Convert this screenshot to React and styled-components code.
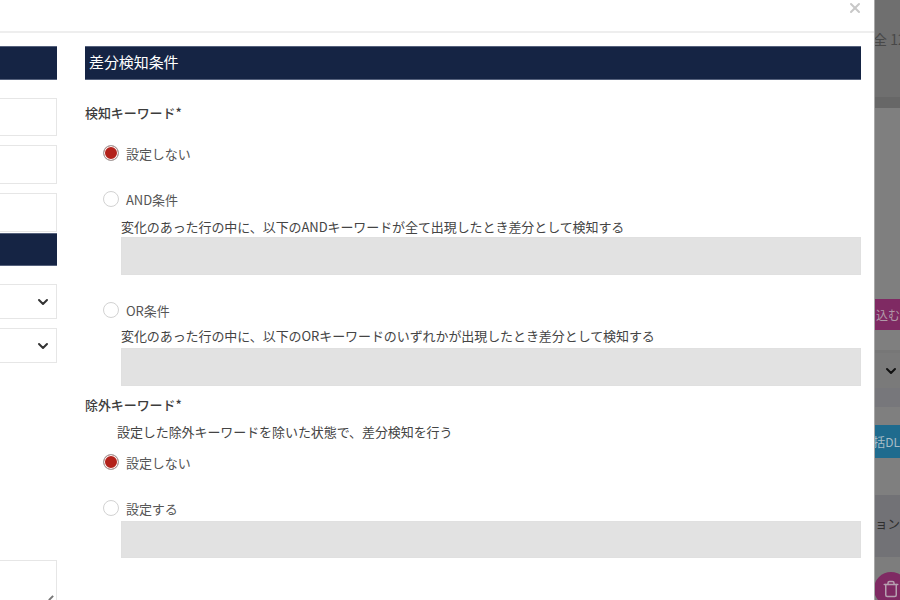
import React from "react";
import styled, { createGlobalStyle } from "styled-components";
import { ChevronDown, Trash, X } from "lucide-react";

const Global = createGlobalStyle`
  html, body { margin: 0; padding: 0; background: #777; }
  body { font-family: "Noto Sans CJK JP", "Noto Sans", sans-serif; }
`;

const Page = styled.div`
  width: 900px; height: 600px; overflow: hidden; display: flex; background: #7d7d7d;
`;
const Modal = styled.div`
  width: 875px; height: 600px; flex: none; background: #fff; overflow: hidden;
  border-right: 1px solid #a8a8a8; box-sizing: border-box;
`;
const ModalTop = styled.div`
  height: 33px; box-sizing: border-box; border-bottom: 2px solid #eee;
  display: flex; justify-content: flex-end; align-items: flex-start; padding-right: 11px; color: #c8c8c8;
`;
const Columns = styled.div`
  display: flex; padding-top: 13px; gap: 28px; align-items: flex-start;
`;
const LeftColumn = styled.div`width: 57px; flex: none; display: flex; flex-direction: column;`;
const RightColumn = styled.div`
  width: 776px; flex: none; display: flex; flex-direction: column; color: #444;
  font-size: 13px; letter-spacing: -0.08px;
`;
const SectionBar = styled.div`
  height: ${p => p.$h || 34}px; box-sizing: border-box; background: #152444;
  color: #fff; font-size: 15px; font-weight: 400; line-height: 30px; padding-left: 4px;
  border-bottom: 1px solid #55617c; border-top: 1px solid #55617c;
  margin-top: ${p => p.$mt || 0}px;
`;
const LeftInput = styled.div`
  position: relative;
  height: ${p => p.$h}px; box-sizing: border-box; margin-top: ${p => p.$mt}px;
  border: 1px solid #e6e6e6; border-left: none; display: flex; align-items: center;
  justify-content: flex-end; padding-right: 5px; color: #333; background: #fff;
`;
const ResizeGrip = styled.span`
  position: absolute; right: 2px; top: 36px; width: 6px; height: 2px;
  background: #777; transform: rotate(-45deg);
`;
const FieldLabel = styled.div`
  font-weight: 500; color: #3c3c3c; line-height: 20px; margin-top: ${p => p.$mt}px;
`;
const Note = styled.div`
  line-height: 18px; margin: ${p => p.$mt}px 0 0 ${p => p.$ml}px; color: #444;
`;
const RadioRow = styled.div`
  display: flex; align-items: center; gap: 7px; margin: ${p => p.$mt}px 0 0 18px;
  height: 20px; color: #555; font-size: 13px;
`;
const Radio = styled.span`
  width: 16px; height: 16px; flex: none; box-sizing: border-box; border-radius: 50%;
  background: ${p => (p.$on ? "#b3211a" : "#fff")};
  border: ${p => (p.$on ? "1px solid #a5a5a5" : "1.5px solid #d2d2d2")};
  box-shadow: ${p => (p.$on ? "inset 0 0 0 1px #fff" : "none")};
`;
const DisabledBox = styled.div`
  height: ${p => p.$h}px; margin: ${p => p.$mt}px 0 0 36px; background: #e2e2e2;
  border: 1px solid #e0e0e0; box-sizing: border-box;
`;

const Backdrop = styled.div`
  flex: 1; min-width: 0; display: flex; flex-direction: column; overflow: hidden; white-space: nowrap;
  color: #444; font-size: 13px;
  & > * { flex: none; }
`;
const BackTop = styled.div`
  height: 97px; box-sizing: border-box; background: #6f6f6f; padding-top: 30px; line-height: 18px;
  color: #484848; font-size: 14px; margin-left: -2px;
`;
const BackGap = styled.div`height: ${p => p.$h}px; background: ${p => p.$bg || "#7f7f7f"};`;
const BackButton = styled.div`
  height: ${p => p.$h}px; background: ${p => p.$bg}; color: ${p => p.$fg}; line-height: ${p => p.$h}px; font-size: 12px;
  display: flex; justify-content: flex-end;
`;
const BackSelect = styled.div`
  height: 35px; background: #7a7a7a;
  display: flex; align-items: center; justify-content: flex-end; color: #111; padding-right: 1px;
`;
const BackRow = styled.div`
  height: 62px; background: #727276; line-height: 58px; color: #2f2f2f; font-size: 12.5px;
`;
const Circle = styled.div`
  width: 34px; height: 34px; border-radius: 50%; background: #7f2a63;
  display: flex; align-items: center; justify-content: center; color: #b6a0b0;
  margin: 15px 0 0 -1px;
`;

export default function App() {
  return (
    <Page>
      <Global />
      <Modal>
        <ModalTop><X size={16} strokeWidth={3} /></ModalTop>
        <Columns>
          <LeftColumn>
            <SectionBar />
            <LeftInput $h={38} $mt={18} />
            <LeftInput $h={39} $mt={9} />
            <LeftInput $h={39} $mt={9} />
            <SectionBar $h={33} $mt={1} />
            <LeftInput $h={35} $mt={18}><ChevronDown size={16} strokeWidth={3} /></LeftInput>
            <LeftInput $h={35} $mt={9}><ChevronDown size={16} strokeWidth={3} /></LeftInput>
            <LeftInput $h={60} $mt={197}><ResizeGrip /></LeftInput>
          </LeftColumn>
          <RightColumn>
            <SectionBar>差分検知条件</SectionBar>
            <FieldLabel $mt={23}>検知キーワード*</FieldLabel>
            <RadioRow $mt={20}><Radio $on />設定しない</RadioRow>
            <RadioRow $mt={26}><Radio />AND条件</RadioRow>
            <Note $mt={9} $ml={36}>変化のあった行の中に、以下のANDキーワードが全て出現したとき差分として検知する</Note>
            <DisabledBox $h={38} $mt={1} />
            <RadioRow $mt={25}><Radio />OR条件</RadioRow>
            <Note $mt={7} $ml={36}>変化のあった行の中に、以下のORキーワードのいずれかが出現したとき差分として検知する</Note>
            <DisabledBox $h={38} $mt={3} />
            <FieldLabel $mt={9}>除外キーワード*</FieldLabel>
            <Note $mt={8} $ml={32}>設定した除外キーワードを除いた状態で、差分検知を行う</Note>
            <RadioRow $mt={11}><Radio $on />設定しない</RadioRow>
            <RadioRow $mt={26}><Radio />設定する</RadioRow>
            <DisabledBox $h={37} $mt={3} />
          </RightColumn>
        </Columns>
      </Modal>
      <Backdrop>
        <BackTop>全 12</BackTop>
        <BackGap $h={11} $bg="#676767" />
        <BackGap $h={191} />
        <BackButton $h={31} $bg="#7f2a63" $fg="#b09aa8">込む</BackButton>
        <BackGap $h={20} />
        <BackGap $h={3} $bg="#777" />
        <BackSelect><ChevronDown size={16} strokeWidth={3} /></BackSelect>
        <BackGap $h={19} $bg="#77777b" />
        <BackGap $h={18} />
        <BackButton $h={33} $bg="#1f6b8e" $fg="#a8bcc6">括DL</BackButton>
        <BackGap $h={37} />
        <BackRow>ョン</BackRow>
        <Circle><Trash size={18} /></Circle>
      </Backdrop>
    </Page>
  );
}
